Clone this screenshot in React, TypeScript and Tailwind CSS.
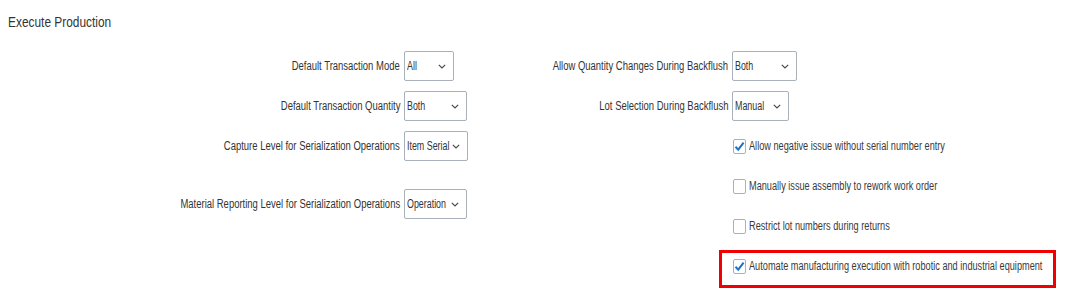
import React from "react";

const font = { fontFamily: '"Liberation Sans", Arial, sans-serif' };

// the reference text is a narrow face; squeeze Liberation Sans to match
function Narrow({ children, squeeze, right }: { children: React.ReactNode; squeeze: string; right?: boolean }) {
  return (
    <span className={`inline-block whitespace-nowrap ${squeeze} ${right ? "origin-right" : "origin-left"}`}>
      {children}
    </span>
  );
}

function Chevron() {
  return (
    <svg width="8" height="5" viewBox="0 0 8 5" className="shrink-0">
      <path d="M0.8 0.8 L4 4 L7.2 0.8" fill="none" stroke="#4a4a4a" strokeWidth="1.2" />
    </svg>
  );
}

function Select({ value, width }: { value: string; width: string }) {
  return (
    <div
      className={`${width} h-[30px] flex items-center pl-[2px] pr-[7px] bg-white border border-[#a9b1ba] rounded-[2px] text-[12px] text-[#333333]`}
    >
      <div className="flex-1 min-w-0">
        <Narrow squeeze="scale-x-[0.74]">{value}</Narrow>
      </div>
      <Chevron />
    </div>
  );
}

function Label({ children }: { children: React.ReactNode }) {
  return (
    <div className="flex justify-end">
      <Narrow squeeze="scale-x-[0.79]" right>
        {children}
      </Narrow>
    </div>
  );
}

function Check({ checked, label }: { checked: boolean; label: string }) {
  return (
    <div className="flex items-center gap-[3px] pl-[1px]">
      <div className="w-[13px] h-[15px] shrink-0 border border-[#a9b1ba] rounded-[2px] bg-white flex items-center justify-center">
        {checked && (
          <svg width="11" height="11" viewBox="0 0 11 11">
            <path d="M1.5 5.8 L4.2 8.6 L9.6 1.6" fill="none" stroke="#1f73c6" strokeWidth="2" />
          </svg>
        )}
      </div>
      <span className="text-[12px] text-[#3a3a3a]">
        <Narrow squeeze="scale-x-[0.765]">{label}</Narrow>
      </span>
    </div>
  );
}

export default function App() {
  return (
    <div className="w-[1066px] h-[299px] bg-white relative overflow-hidden" style={font}>
      <div className="pl-[8px] pt-[12px] text-[14px] leading-[20px] text-[#333333]">
        <Narrow squeeze="scale-x-[0.85]">Execute Production</Narrow>
      </div>

      <div className="mt-[14px] grid grid-cols-[400px_100px_220px_auto] grid-rows-[40px_40px_40px_40px_40px_40px] gap-x-[4px] items-center text-[12px] text-[#333333]">
        {/* row 1 */}
        <Label>Default Transaction Mode</Label>
        <Select value="All" width="w-[50px]" />
        <Label>Allow Quantity Changes During Backflush</Label>
        <Select value="Both" width="w-[65px]" />

        {/* row 2 */}
        <Label>Default Transaction Quantity</Label>
        <Select value="Both" width="w-[63px]" />
        <Label>Lot Selection During Backflush</Label>
        <Select value="Manual" width="w-[57px]" />

        {/* row 3 */}
        <Label>Capture Level for Serialization Operations</Label>
        <Select value="Item Serial" width="w-[64px]" />
        <div />
        <Check checked label="Allow negative issue without serial number entry" />

        {/* rows 4-5, left pair spans both */}
        <div className="row-span-2 self-center -translate-y-[2px]">
          <Label>Material Reporting Level for Serialization Operations</Label>
        </div>
        <div className="row-span-2 self-center -translate-y-[2px]">
          <Select value="Operation" width="w-[63px]" />
        </div>
        <div />
        <Check checked={false} label="Manually issue assembly to rework work order" />
        <div />
        <Check checked={false} label="Restrict lot numbers during returns" />

        {/* row 6 */}
        <div />
        <div />
        <div />
        <Check checked label="Automate manufacturing execution with robotic and industrial equipment" />
      </div>

      {/* annotation highlight */}
      <div className="absolute left-[719px] top-[250px] w-[337px] h-[38px] border-[3px] border-[#f00000] pointer-events-none" />
    </div>
  );
}
